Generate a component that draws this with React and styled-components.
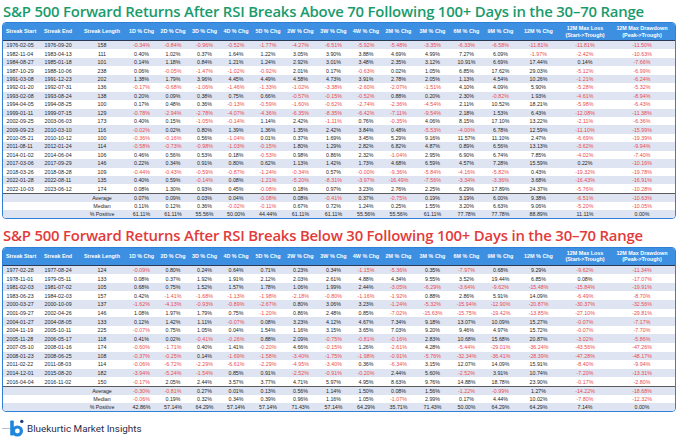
import React from "react";
import styled, { createGlobalStyle } from "styled-components";

const GlobalStyle = createGlobalStyle`
  html, body { margin: 0; padding: 0; background: #ffffff; }
  * { box-sizing: border-box; }
`;

const COLS = "38px 37px 48px 31px 32px 31px 32px 32px 33px 33px 32px 33px 35px 33px 35px 41px 52px 62px";

const HEADERS = [
  ["Streak Start"], ["Streak End"], ["Streak Length"],
  ["1D % Chg"], ["2D % Chg"], ["3D % Chg"], ["4D % Chg"], ["5D % Chg"],
  ["2W % Chg"], ["3W % Chg"], ["4W % Chg"], ["2M % Chg"], ["3M % Chg"],
  ["6M % Chg"], ["9M % Chg"], ["12M % Chg"],
  ["12M Max Loss", "(Start->Trough)"], ["12M Max Drawdown", "(Peak->Trough)"],
];

const parse = (s) => s.trim().split("\n").map((l) => l.trim().split(/\s+/));

const ABOVE = parse(`
1976-02-05 1976-09-20 158 -0.34% -0.84% -0.96% -0.52% -1.77% -4.27% -6.51% -5.92% -5.48% -3.35% -6.33% -6.58% -11.81% -11.81% -11.50%
1982-11-04 1983-04-13 111 0.40% 1.02% 0.37% 1.64% 1.22% 3.05% 3.90% 3.88% 4.69% 4.99% 7.27% 6.09% -1.97% -2.42% -10.63%
1984-08-27 1985-01-18 101 0.14% 1.18% 0.84% 1.21% 1.24% 2.92% 3.01% 3.48% 2.35% 3.12% 10.91% 6.69% 17.44% 0.14% -7.66%
1987-10-29 1988-10-06 238 0.06% -0.05% -1.47% -1.02% -0.92% 2.01% 0.17% -0.63% 0.02% 1.05% 6.85% 17.62% 29.03% -5.12% -6.99%
1991-03-08 1991-12-23 202 1.38% 1.79% 3.96% 4.45% 4.49% 4.58% 4.73% 3.91% 2.78% 2.05% 1.13% 4.54% 10.26% -1.21% -6.24%
1992-01-20 1992-07-31 136 -0.17% -0.68% -1.06% -1.46% -1.33% -1.02% -3.38% -2.60% -2.07% -1.51% 4.10% 4.09% 5.90% -5.28% -5.32%
1993-02-08 1993-08-24 138 0.20% 0.09% 0.38% 0.75% 0.66% -0.57% -0.15% -0.52% 0.88% 0.20% 2.30% -0.82% 1.93% -4.61% -8.94%
1994-04-05 1994-08-25 100 0.17% 0.48% 0.36% -0.13% -0.59% -1.60% -0.62% -2.74% -2.36% -4.54% 2.11% 10.52% 18.21% -5.98% -6.43%
1999-01-11 1999-07-15 129 -0.78% -2.94% -2.78% -4.07% -4.36% -6.35% -8.35% -6.42% -7.11% -9.54% 2.18% 1.53% 6.43% -12.08% -11.38%
2002-09-25 2003-06-03 173 0.40% 0.15% -1.05% -0.14% 1.14% 2.42% -1.11% 0.76% -0.35% 4.06% 8.15% 17.10% 13.22% -2.11% -6.36%
2009-09-23 2010-03-10 116 -0.02% 0.02% 0.80% 1.39% 1.36% 1.35% 2.42% 3.84% 0.48% -5.53% -4.00% 6.78% 12.59% -11.10% -15.99%
2010-05-21 2010-10-12 100 -0.36% -0.16% 0.56% -1.04% 0.01% 0.37% 1.69% 3.45% 5.29% 9.16% 11.57% 11.10% 2.47% -6.69% -19.39%
2011-08-11 2012-01-24 114 -0.58% -0.73% -0.98% -1.03% -0.15% 1.80% 1.29% 2.82% 6.82% 4.87% 0.89% 6.56% 13.13% -3.62% -9.94%
2014-01-02 2014-06-04 106 0.46% 0.56% 0.53% 0.18% -0.53% 0.98% 0.86% 2.32% -1.04% 2.95% 6.90% 6.74% 7.85% -4.02% -7.40%
2017-03-06 2017-09-29 146 0.22% 0.34% 0.91% 0.80% 0.62% 1.13% 1.42% 1.73% 4.68% 6.59% 4.57% 7.28% 15.59% 0.22% -10.16%
2018-03-26 2018-08-28 109 -0.44% -0.43% -0.59% -0.87% -1.24% -0.34% 0.57% -0.00% -9.36% -5.84% -4.16% -5.82% 0.43% -19.32% -19.78%
2022-01-28 2022-08-11 135 0.40% 0.59% -0.14% 0.08% -1.21% -5.20% -8.31% -3.97% -16.49% -7.56% -3.34% -3.36% 3.68% -16.43% -16.91%
2022-10-03 2023-06-12 174 0.08% 1.30% 0.93% 0.45% -0.08% 0.18% 0.97% 3.23% 2.76% 2.25% 6.29% 17.89% 24.37% -5.76% -10.28%
`);

const ABOVE_SUM = [
  ["Average", ..."0.07% 0.09% 0.03% 0.04% -0.08% 0.08% -0.41% 0.37% -0.75% 0.19% 3.19% 6.00% 9.38% -6.51% -10.63%".split(" ")],
  ["Median", ..."0.11% 0.12% 0.36% -0.02% -0.11% 0.67% 0.72% 1.24% 0.25% 1.55% 3.20% 6.63% 9.06% -5.20% -10.05%".split(" ")],
  ["% Positive", ..."61.11% 61.11% 55.56% 50.00% 44.44% 61.11% 61.11% 55.56% 55.56% 61.11% 77.78% 77.78% 88.89% 11.11% 0.00%".split(" ")],
];

const BELOW = parse(`
1977-02-28 1977-08-24 124 -0.09% 0.80% 0.24% 0.64% 0.71% 0.23% 0.34% -1.15% -5.36% 0.35% -7.97% 0.68% 9.29% -9.62% -11.34%
1978-11-01 1979-05-11 133 0.08% 0.37% 1.92% 1.91% 2.12% 2.03% 2.61% 4.88% 4.34% 9.55% 3.52% 19.44% 6.85% 0.08% -17.07%
1981-02-03 1981-07-02 105 0.68% 0.75% 1.52% 1.57% 1.78% 1.06% 1.99% 2.44% -3.05% -6.29% -3.64% -9.62% -15.48% -15.84% -19.91%
1983-06-23 1984-02-03 157 0.42% -1.41% -1.68% -1.13% -1.98% -2.18% -0.80% -1.16% -1.92% 0.88% 2.86% 5.91% 14.09% -6.49% -8.70%
2000-03-27 2000-10-09 137 -1.62% -4.13% -0.93% -0.89% -2.67% 0.80% 3.06% 3.23% -1.24% -5.32% -15.94% -12.90% -20.87% -30.37% -32.56%
2001-09-27 2002-04-26 146 1.08% 1.97% 1.79% 0.75% -1.20% 0.86% 2.48% 0.85% -7.02% -15.63% -15.75% -19.42% -13.85% -27.10% -29.81%
2004-01-27 2004-08-05 133 0.12% 1.42% 1.11% -0.07% 0.08% 3.23% 4.12% 4.67% 7.34% 9.18% 13.07% 10.09% 15.27% -0.07% -7.17%
2004-11-19 2005-10-11 225 -0.07% 0.75% 1.05% 0.04% 1.54% 1.16% 3.15% 3.65% 7.03% 9.20% 9.46% 4.97% 15.72% -0.07% -7.70%
2005-11-28 2006-05-17 118 0.41% 0.02% -0.41% -0.26% 0.88% 2.09% -0.75% -0.81% -0.16% 2.83% 10.68% 15.68% 20.87% -3.02% -5.86%
2007-05-10 2008-01-16 174 -0.60% -1.71% 0.40% 1.41% -0.20% 4.66% -0.15% 1.26% -2.61% 4.28% -5.44% -29.01% -36.24% -43.56% -47.26%
2008-01-23 2008-06-25 108 -0.37% -0.25% 0.14% -1.69% -1.58% -3.40% -1.75% -1.98% -0.91% -5.76% -32.34% -36.41% -28.39% -47.28% -48.17%
2011-02-22 2011-08-03 114 -0.06% -6.72% -2.29% -6.61% -2.29% -4.95% -3.40% 0.36% -6.34% 3.15% 12.07% 14.09% 15.91% -8.40% -9.94%
2014-12-01 2015-08-20 182 -3.94% -5.24% -1.54% 0.85% 0.91% -2.52% -0.91% -0.20% 2.44% 5.60% -2.52% 3.91% 10.74% -7.20% -13.31%
2016-04-04 2016-11-02 150 -0.17% 2.05% 2.44% 3.57% 3.77% 4.71% 5.97% 4.95% 8.63% 9.76% 14.88% 18.78% 23.90% -0.17% -2.80%
`);

const BELOW_SUM = [
  ["Average", ..."-0.30% -0.81% 0.27% 0.01% 0.13% 0.56% 1.14% 1.50% 0.08% 1.56% -1.22% -0.99% 1.27% -14.22% -18.68%".split(" ")],
  ["Median", ..."-0.06% 0.19% 0.32% 0.34% 0.39% 0.96% 1.16% 1.05% -1.07% 2.99% 0.17% 4.44% 10.02% -7.80% -12.32%".split(" ")],
  ["% Positive", ..."42.86% 57.14% 64.29% 57.14% 57.14% 71.43% 57.14% 64.29% 35.71% 71.43% 50.00% 64.29% 64.29% 7.14% 0.00%".split(" ")],
];

const Page = styled.div`
  width: 680px;
  height: 441px;
  padding: 0 2px;
  display: flex;
  flex-direction: column;
  overflow: hidden;
`;

const Title = styled.h1`
  margin: ${(p) => p.$top}px 0 0 1px;
  height: ${(p) => p.$h}px;
  font-family: "Open Sans", "Noto Sans", sans-serif;
  font-weight: 600;
  font-size: 14.9px;
  line-height: ${(p) => p.$h}px;
  letter-spacing: -0.2px;
  color: ${(p) => p.$color};
  white-space: nowrap;
`;

const TableBox = styled.div`
  width: 674px;
  border: 1.5px solid #2f80d8;
  border-radius: 4px;
  overflow: hidden;
  font-family: "Liberation Sans", Arial, sans-serif;
`;

const HeaderRow = styled.div`
  display: grid;
  grid-template-columns: ${COLS};
  height: ${(p) => p.$h}px;
  background: #3d8fe2;
  border-bottom: 1px solid #2b3a55;
  align-items: center;
`;

const HeaderCell = styled.div`
  color: #ffffff;
  font-weight: 700;
  font-size: 5.4px;
  line-height: 6.2px;
  text-align: ${(p) => p.$align};
  padding-left: ${(p) => (p.$align === "left" ? "3px" : "0")};
  white-space: nowrap;
`;

const Row = styled.div`
  display: grid;
  grid-template-columns: ${COLS};
  height: ${(p) => p.$h}px;
  align-items: center;
  background: ${(p) => (p.$shade ? "#dfe4f2" : "#ffffff")};
`;

const Cell = styled.div`
  font-size: 5.3px;
  line-height: 6px;
  color: ${(p) => (p.$neg ? "#ec4a4d" : "#262626")};
  text-align: ${(p) => p.$align};
  padding-left: ${(p) => (p.$align === "left" ? "3.5px" : "0")};
  white-space: nowrap;
`;

const Summary = styled.div`
  border-top: 1.5px solid #5a5a5a;
`;

const Footer = styled.div`
  margin-top: auto;
  height: 24px;
  display: flex;
  align-items: center;
  gap: 1px;
  padding-bottom: 2px;
`;

const Brand = styled.span`
  font-family: Roboto, "Noto Sans", sans-serif;
  font-size: 9.9px;
  color: #1f2c4c;
  letter-spacing: 0;
`;

const Logo = () => (
  <svg width="24" height="20" viewBox="0 0 24 20">
    <line x1="0" y1="10.5" x2="9" y2="10.5" stroke="#9fb3c8" strokeWidth="0.8" />
    <rect x="8.2" y="2.5" width="3.6" height="15" rx="0.8" fill="#1f86dd" />
    <circle cx="15.4" cy="13" r="4" fill="none" stroke="#1f86dd" strokeWidth="3.2" />
    <circle cx="19.8" cy="3.4" r="1.7" fill="#1d3f7a" />
  </svg>
);

const isNeg = (v) => typeof v === "string" && v.startsWith("-");

function DataTable({ rows, summary, rowH, sumH, headH }) {
  return (
    <TableBox>
      <HeaderRow $h={headH}>
        {HEADERS.map((h, i) => (
          <HeaderCell key={i} $align={i < 2 ? "left" : "center"}>
            {h.map((line, j) => (
              <div key={j}>{line}</div>
            ))}
          </HeaderCell>
        ))}
      </HeaderRow>
      {rows.map((r, i) => (
        <Row key={i} $h={rowH} $shade={i % 2 === 0}>
          {r.map((v, j) => (
            <Cell key={j} $align={j < 2 ? "left" : "center"} $neg={j > 2 && isNeg(v)}>
              {v}
            </Cell>
          ))}
        </Row>
      ))}
      <Summary>
        {summary.map((r, i) => (
          <Row key={i} $h={sumH} $shade={i % 2 === 0}>
            <Cell $align="left" />
            <Cell $align="left" />
            {r.map((v, j) => (
              <Cell key={j} $align="center" $neg={j > 0 && isNeg(v)}>
                {v}
              </Cell>
            ))}
          </Row>
        ))}
      </Summary>
    </TableBox>
  );
}

export default function App() {
  return (
    <>
      <GlobalStyle />
      <Page>
        <Title $color="#1a9b6c" $top={0} $h={22}>
          S&amp;P 500 Forward Returns After RSI Breaks Above 70 Following 100+ Days in the 30–70 Range
        </Title>
        <DataTable rows={ABOVE} summary={ABOVE_SUM} rowH={8.45} sumH={8.1} headH={18} />
        <Title $color="#e23b3b" $top={5} $h={23}>
          S&amp;P 500 Forward Returns After RSI Breaks Below 30 Following 100+ Days in the 30–70 Range
        </Title>
        <DataTable rows={BELOW} summary={BELOW_SUM} rowH={8.6} sumH={8.1} headH={17.5} />
        <Footer>
          <Logo />
          <Brand>Bluekurtic Market Insights</Brand>
        </Footer>
      </Page>
    </>
  );
}
